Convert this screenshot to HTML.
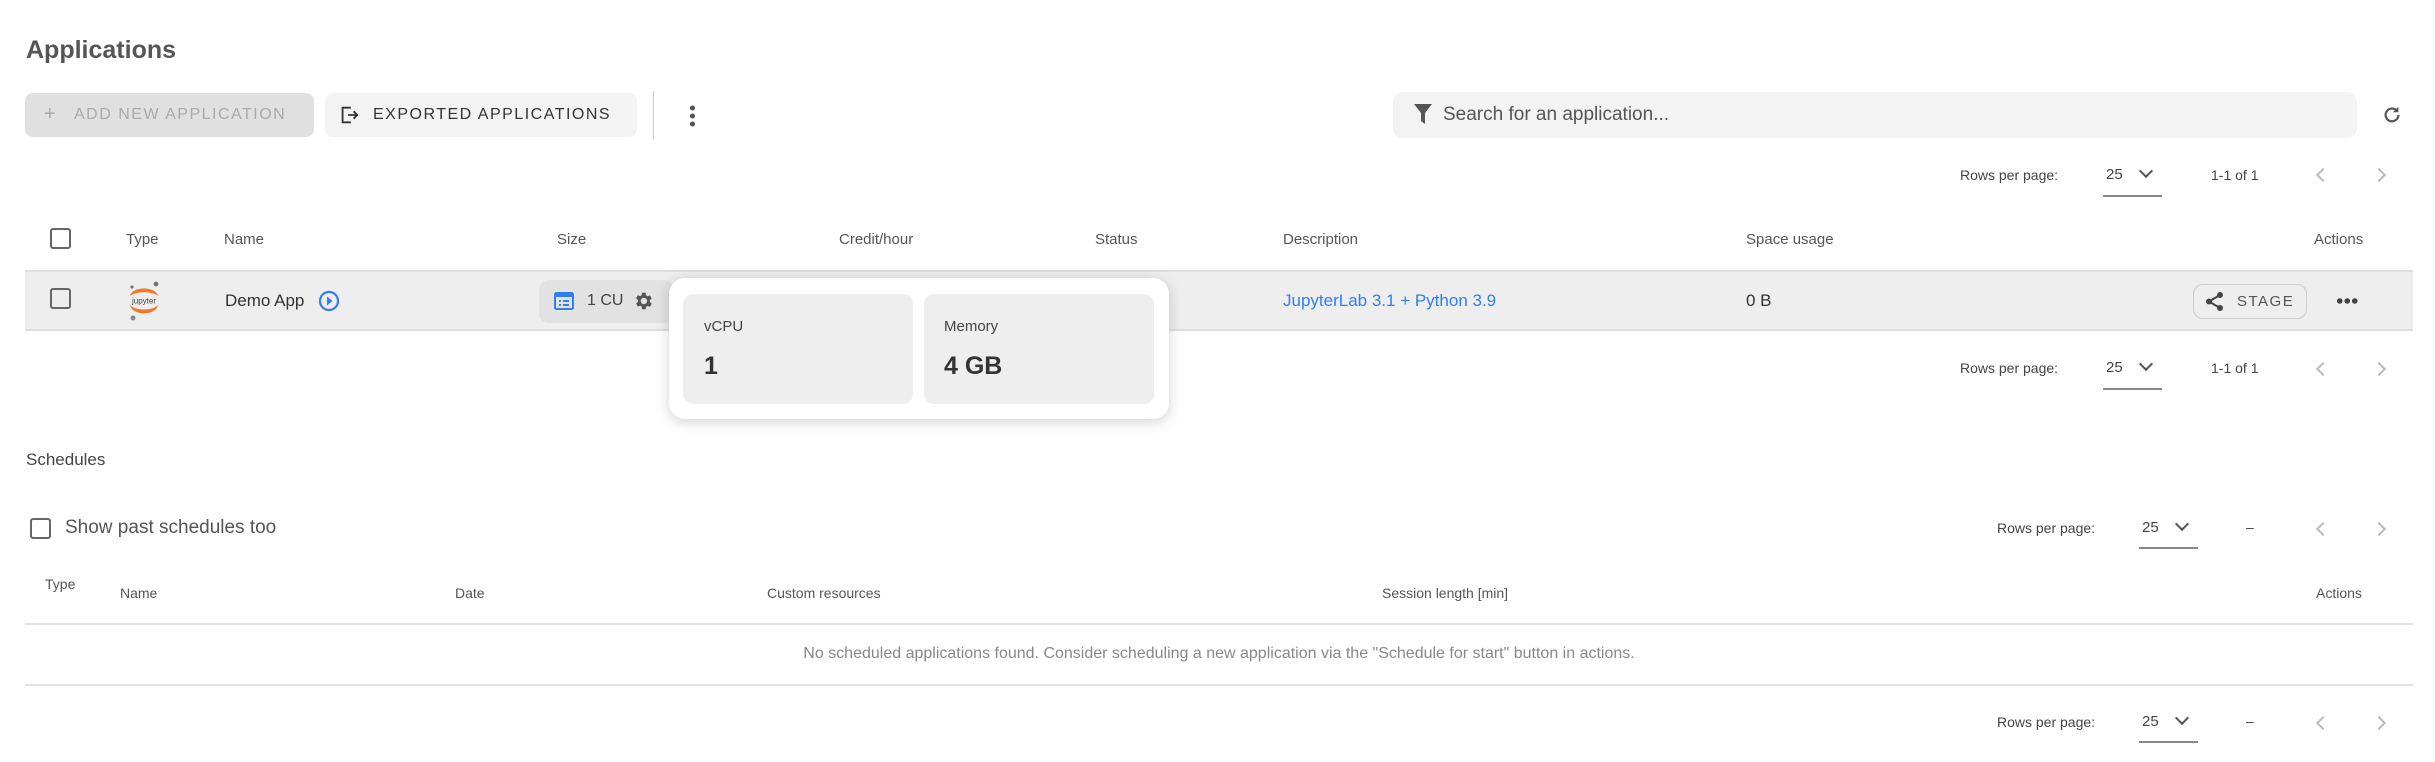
<!DOCTYPE html>
<html><head><meta charset="utf-8"><style>
*{box-sizing:border-box;margin:0;padding:0}
body{width:2435px;height:762px;background:#fff;font-family:"Liberation Sans",sans-serif;color:#333;position:relative;overflow:hidden}
.a{position:absolute;white-space:nowrap}
.h{font-size:15px;color:#555}
.t{font-size:17px;color:#333}
.pg{font-size:14px;color:#444}
.cb{position:absolute;width:21px;height:21px;border:2px solid #666;border-radius:3px}
.line{position:absolute;left:25px;width:2388px;height:2px;background:#e2e2e2}
.chev{position:absolute;width:10px;height:10px;border-right:2px solid #555;border-bottom:2px solid #555;transform:rotate(45deg)}
.arr{position:absolute;width:10px;height:10px;border-left:2px solid #bbb;border-bottom:2px solid #bbb}
</style></head><body>
<div class="a" style="left:26px;top:36px;font-size:25px;font-weight:bold;color:#555">Applications</div>

<div class="a" style="left:25px;top:93px;width:289px;height:44px;background:#e0e0e0;border-radius:8px"></div>
<div class="a" style="left:44px;top:103px;font-size:20px;color:#aaa">+</div>
<div class="a" style="left:74px;top:106px;font-size:16px;letter-spacing:1.5px;color:#aaa">ADD NEW APPLICATION</div>
<div class="a" style="left:325px;top:93px;width:312px;height:44px;background:#f3f3f3;border-radius:8px"></div>
<svg class="a" style="left:338px;top:104px" width="22" height="22" viewBox="0 0 24 24"><path d="M14 4H5v16h9M11 12h10M17 8l4 4-4 4" fill="none" stroke="#333" stroke-width="2"/></svg>
<div class="a" style="left:373px;top:106px;font-size:16px;letter-spacing:1.5px;color:#333">EXPORTED APPLICATIONS</div>
<div class="a" style="left:653px;top:91px;width:1px;height:48px;background:#ccc"></div>
<div class="a" style="left:690px;top:104px;width:5px;height:24px;background:radial-gradient(circle,#555 2.4px,transparent 2.6px) 0 0/5px 8px"></div>

<div class="a" style="left:1393px;top:92px;width:964px;height:46px;background:#f3f3f3;border-radius:10px"></div>
<svg class="a" style="left:1413px;top:103px" width="20" height="22" viewBox="0 0 20 22"><path d="M1 1h18l-7 9v11l-4-3v-8z" fill="#555"/></svg>
<div class="a" style="left:1443px;top:104px;font-size:19px;color:#555">Search for an application...</div>
<svg class="a" style="left:2381px;top:103px" width="22" height="24" viewBox="0 0 24 24"><path d="M19 12a7 7 0 1 1-2-5" fill="none" stroke="#555" stroke-width="2.4"/><path d="M19 3v6h-6z" fill="#555"/></svg>

<div class="a pg" style="left:1960px;top:167px">Rows per page:</div>
<div class="a pg" style="left:2106px;top:166px;font-size:15px">25</div>
<div class="chev" style="left:2141px;top:166px"></div>
<div class="a" style="left:2103px;top:195px;width:59px;height:2px;background:#888"></div>
<div class="a pg" style="left:2211px;top:167px">1-1 of 1</div>
<div class="arr" style="left:2318px;top:170px;transform:rotate(45deg)"></div>
<div class="arr" style="left:2374px;top:170px;transform:rotate(-135deg)"></div>

<div class="cb" style="left:50px;top:228px"></div>
<div class="a h" style="left:126px;top:231px">Type</div>
<div class="a h" style="left:224px;top:231px">Name</div>
<div class="a h" style="left:557px;top:231px">Size</div>
<div class="a h" style="left:839px;top:231px">Credit/hour</div>
<div class="a h" style="left:1095px;top:231px">Status</div>
<div class="a h" style="left:1283px;top:231px">Description</div>
<div class="a h" style="left:1746px;top:231px">Space usage</div>
<div class="a h" style="left:2314px;top:231px">Actions</div>

<div class="a" style="left:25px;top:270px;width:2388px;height:61px;background:#eee;border-top:2px solid #ddd;border-bottom:2px solid #ddd"></div>
<div class="cb" style="left:50px;top:288px"></div>
<svg class="a" style="left:126px;top:280px" width="36" height="42" viewBox="0 0 36 42"><path d="M4 16C6 6 30 6 32 16C27 11 9 11 4 16z" fill="#f37726"/><path d="M4 25C6 36 30 36 32 25C27 31 9 31 4 25z" fill="#f37726"/><circle cx="30" cy="4" r="2.4" fill="#777"/><circle cx="6" cy="7" r="1.6" fill="#777"/><circle cx="7" cy="38" r="2.5" fill="#888"/><text x="18" y="23.5" font-size="8" text-anchor="middle" fill="#444" font-family="Liberation Sans">jupyter</text></svg>
<div class="a t" style="left:225px;top:291px">Demo App</div>
<svg class="a" style="left:318px;top:290px" width="22" height="22" viewBox="0 0 22 22"><circle cx="11" cy="11" r="9" fill="none" stroke="#2f7ff0" stroke-width="2.2"/><path d="M9 6.5v9l5.5-4.5z" fill="#2f7ff0"/></svg>
<div class="a" style="left:539px;top:280px;width:135px;height:43px;background:#e2e2e2;border-radius:10px"></div>
<svg class="a" style="left:554px;top:292px" width="20" height="18" viewBox="0 0 20 18"><rect x="1" y="1" width="18" height="16" rx="1.5" fill="none" stroke="#2f7ff0" stroke-width="2"/><rect x="1" y="1" width="18" height="4" fill="#2f7ff0"/><path d="M5 9h2M9 9h6M5 13h2M9 13h6" stroke="#2f7ff0" stroke-width="2"/></svg>
<div class="a" style="left:587px;top:292px;font-size:16px;color:#444">1 CU</div>
<svg class="a" style="left:632px;top:290px" width="22" height="22" viewBox="0 0 24 24"><path fill="#555" d="M19.4 13a7.5 7.5 0 0 0 0-2l2.1-1.6-2-3.5-2.5 1a7 7 0 0 0-1.700-1L15 3h-4l-.4 2.7a7 7 0 0 0-1.7 1l-2.5-1-2 3.5L6.5 11a7.5 7.5 0 0 0 0 2l-2.1 1.6 2 3.5 2.5-1a7 7 0 0 0 1.7 1L11 21h4l.4-2.7a7 7 0 0 0 1.7-1l2.5 1 2-3.5zM13 15.5a3.5 3.5 0 1 1 0-7 3.5 3.5 0 0 1 0 7z"/></svg>
<div class="a" style="left:1283px;top:291px;font-size:17px;color:#2f7ff0">JupyterLab 3.1 + Python 3.9</div>
<div class="a t" style="left:1746px;top:291px">0 B</div>
<div class="a" style="left:2193px;top:284px;width:114px;height:35px;border:1.5px solid #ccc;border-radius:10px"></div>
<svg class="a" style="left:2205px;top:291px" width="20" height="21" viewBox="0 0 20 21"><circle cx="15" cy="4" r="3" fill="#444"/><circle cx="4" cy="10.5" r="3" fill="#444"/><circle cx="15" cy="17" r="3" fill="#444"/><path d="M15 4L4 10.5 15 17" stroke="#444" stroke-width="2" fill="none"/></svg>
<div class="a" style="left:2237px;top:293px;font-size:15px;letter-spacing:1.5px;color:#555">STAGE</div>
<div class="a" style="left:2336px;top:298px;width:22px;height:6px;background:radial-gradient(circle,#444 2.6px,transparent 2.9px) 0 0/7.5px 6px"></div>

<div class="a" style="left:669px;top:278px;width:500px;height:141px;background:#fff;border-radius:16px;box-shadow:0 3px 14px rgba(0,0,0,.18)"></div>
<div class="a" style="left:683px;top:294px;width:230px;height:110px;background:#eee;border-radius:10px"></div>
<div class="a" style="left:924px;top:294px;width:230px;height:110px;background:#eee;border-radius:10px"></div>
<div class="a" style="left:704px;top:318px;font-size:15px;color:#444">vCPU</div>
<div class="a" style="left:944px;top:318px;font-size:15px;color:#444">Memory</div>
<div class="a" style="left:704px;top:352px;font-size:25px;font-weight:bold;color:#333">1</div>
<div class="a" style="left:944px;top:352px;font-size:25px;font-weight:bold;color:#333">4 GB</div>

<div class="a pg" style="left:1960px;top:360px">Rows per page:</div>
<div class="a pg" style="left:2106px;top:359px;font-size:15px">25</div>
<div class="chev" style="left:2141px;top:359px"></div>
<div class="a" style="left:2103px;top:388px;width:59px;height:2px;background:#888"></div>
<div class="a pg" style="left:2211px;top:360px">1-1 of 1</div>
<div class="arr" style="left:2318px;top:364px;transform:rotate(45deg)"></div>
<div class="arr" style="left:2374px;top:364px;transform:rotate(-135deg)"></div>

<div class="a" style="left:26px;top:450px;font-size:17px;color:#444">Schedules</div>
<div class="cb" style="left:30px;top:518px"></div>
<div class="a" style="left:65px;top:517px;font-size:19px;color:#555">Show past schedules too</div>
<div class="a pg" style="left:1997px;top:520px">Rows per page:</div>
<div class="a pg" style="left:2142px;top:519px;font-size:15px">25</div>
<div class="chev" style="left:2177px;top:519px"></div>
<div class="a" style="left:2139px;top:547px;width:59px;height:2px;background:#888"></div>
<div class="a pg" style="left:2246px;top:519px">–</div>
<div class="arr" style="left:2318px;top:524px;transform:rotate(45deg)"></div>
<div class="arr" style="left:2374px;top:524px;transform:rotate(-135deg)"></div>

<div class="a h" style="left:45px;top:576px;font-size:14px">Type</div>
<div class="a h" style="left:120px;top:585px;font-size:14px">Name</div>
<div class="a h" style="left:455px;top:585px;font-size:14px">Date</div>
<div class="a h" style="left:767px;top:585px;font-size:14px">Custom resources</div>
<div class="a h" style="left:1382px;top:585px;font-size:14px">Session length [min]</div>
<div class="a h" style="left:2316px;top:585px;font-size:14px">Actions</div>
<div class="line" style="top:623px"></div>
<div class="a" style="left:25px;top:645px;width:2388px;text-align:center;font-size:16px;color:#888">No scheduled applications found. Consider scheduling a new application via the "Schedule for start" button in actions.</div>
<div class="line" style="top:684px"></div>

<div class="a pg" style="left:1997px;top:714px">Rows per page:</div>
<div class="a pg" style="left:2142px;top:713px;font-size:15px">25</div>
<div class="chev" style="left:2177px;top:713px"></div>
<div class="a" style="left:2139px;top:741px;width:59px;height:2px;background:#888"></div>
<div class="a pg" style="left:2246px;top:713px">–</div>
<div class="arr" style="left:2318px;top:718px;transform:rotate(45deg)"></div>
<div class="arr" style="left:2374px;top:718px;transform:rotate(-135deg)"></div>
</body></html>
